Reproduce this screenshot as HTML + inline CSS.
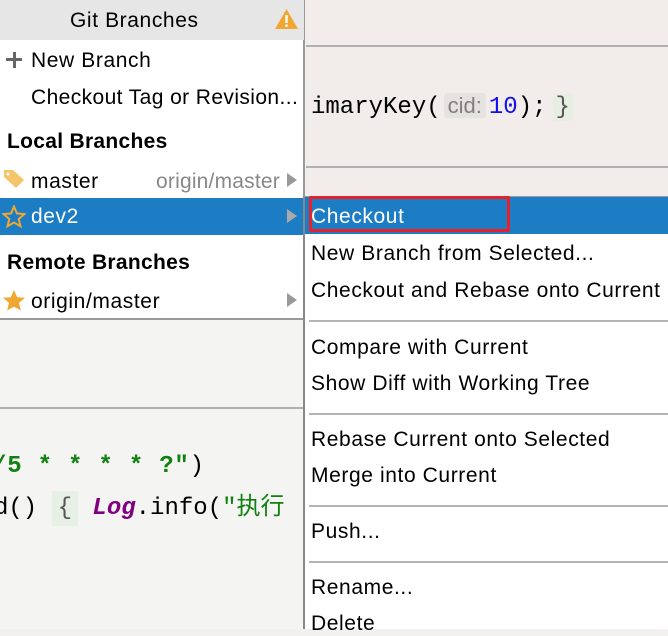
<!DOCTYPE html>
<html><head><meta charset="utf-8"><style>
body{margin:0;width:668px;height:629px;overflow:hidden;position:relative;background:#f3f1f0;font-family:"Liberation Sans","Noto Sans CJK SC",sans-serif;font-size:21px;letter-spacing:0.6px;color:#000}
.a{position:absolute;white-space:nowrap}
.t{line-height:24px;margin-top:1px}
.mono{font-family:"Liberation Mono","Noto Sans CJK SC",monospace;font-size:24px;letter-spacing:0}
</style></head><body>
<div class="a" style="left:306px;top:0;width:362px;height:197px;background:#f2eceb"></div>
<div class="a" style="left:306px;top:45px;width:362px;height:2px;background:#b0b0b0"></div>
<div class="a" style="left:306px;top:166px;width:362px;height:2px;background:#b0b0b0"></div>
<div class="a mono t" style="left:311px;top:93px">imaryKey(<span style="background:#e6e2e0;color:#808080;font-family:'Liberation Sans';font-size:22px;border-radius:3px;padding:0 4px;margin:0 3px">cid:</span><span style="color:#1010ee">10</span>);<span style="background:#e6efe2;color:#555;margin-left:6px;padding:0 3px">}</span></div>
<div class="a" style="left:0;top:320px;width:304px;height:309px;background:#f4f4f3"></div>
<div class="a" style="left:0;top:407px;width:304px;height:2px;background:#b0b0b0"></div>
<div class="a mono t" style="left:-8px;top:454px;color:#108010;font-weight:bold;letter-spacing:0.8px">/5 * * * * ?"<span style="color:#000;font-weight:normal">)</span></div>
<div class="a mono t" style="left:-6px;top:496px">d() <span style="background:#e6f0e4;color:#555;padding:4px 6px">{</span> <span style="color:#800080;font-style:italic;font-weight:bold">Log</span>.info(<span style="color:#108010">"执行</span></div>

<!-- left popup -->
<div class="a" style="left:0;top:0;width:305px;height:320px;background:#fff;border-right:2px solid #999;border-bottom:2px solid #999;box-sizing:border-box"></div>
<div class="a" style="left:0;top:0;width:304px;height:40px;background:#e6e6e6"></div>
<div class="a t" style="left:70px;top:8px">Git Branches</div>
<svg class="a" style="left:274px;top:8px" width="25" height="22" viewBox="0 0 25 22"><path d="M12.5 1L24 21H1Z" fill="#f0a732"/><rect x="11.3" y="7" width="2.4" height="8" fill="#fff"/><rect x="11.3" y="16.5" width="2.4" height="2.4" fill="#fff"/></svg>
<div class="a" style="left:6px;top:58px;width:16px;height:3px;background:#666"></div>
<div class="a" style="left:12.5px;top:52px;width:3px;height:16px;background:#666"></div>
<div class="a t" style="left:31px;top:48px">New Branch</div>
<div class="a t" style="left:31px;top:85px;letter-spacing:0.4px">Checkout Tag or Revision...</div>
<div class="a t" style="left:7px;top:129px;font-weight:bold;letter-spacing:0.3px">Local Branches</div>
<svg class="a" style="left:3px;top:168px" width="22" height="22" viewBox="0 0 22 22"><path d="M1 2h9l11 10-8 8L1 9Z" fill="#f6c46b"/><circle cx="5" cy="6" r="1.5" fill="#fff"/></svg>
<div class="a t" style="left:31px;top:169px">master</div>
<div class="a t" style="left:156px;top:169px;color:#888;letter-spacing:0.2px">origin/master</div>
<svg class="a" style="left:287px;top:173px" width="10" height="14"><path d="M0 0L10 7 0 14Z" fill="#999"/></svg>
<div class="a" style="left:0;top:198px;width:304px;height:37px;background:#1c7cc4"></div>
<svg class="a" style="left:2px;top:205px" width="24" height="23" viewBox="0 0 24 23"><path d="M12 1.5l3 7 7.5.5-5.8 5 1.8 7.3L12 17.5 5.5 21.3l1.8-7.3L1.5 9l7.5-.5Z" fill="none" stroke="#f0a732" stroke-width="2"/></svg>
<div class="a t" style="left:31px;top:204px;color:#fff">dev2</div>
<svg class="a" style="left:287px;top:209px" width="10" height="14"><path d="M0 0L10 7 0 14Z" fill="#aaa"/></svg>
<div class="a t" style="left:7px;top:250px;font-weight:bold;letter-spacing:0.3px">Remote Branches</div>
<svg class="a" style="left:2px;top:289px" width="24" height="23" viewBox="0 0 24 23"><path d="M12 1l3.2 7.2 7.8.6-6 5.1 1.9 7.6L12 17.6 5.1 21.5 7 13.9 1 8.8l7.8-.6Z" fill="#f0a732"/></svg>
<div class="a t" style="left:31px;top:289px">origin/master</div>
<svg class="a" style="left:287px;top:293px" width="10" height="14"><path d="M0 0L10 7 0 14Z" fill="#999"/></svg>

<!-- submenu -->
<div class="a" style="left:303px;top:196px;width:365px;height:433px;background:#fff;border-left:2px solid #888;border-top:1px solid #999;box-sizing:border-box"></div>
<div class="a" style="left:305px;top:197px;width:363px;height:37px;background:#1c7cc4"></div>
<div class="a" style="left:309px;top:196px;width:201px;height:36px;border:3px solid #e8202a;border-radius:2px;box-sizing:border-box"></div>
<div class="a t" style="left:311px;top:204px;color:#fff">Checkout</div>
<div class="a t" style="left:311px;top:241px">New Branch from Selected...</div>
<div class="a t" style="left:311px;top:278px">Checkout and Rebase onto Current</div>
<div class="a" style="left:309px;top:320px;width:359px;height:2px;background:#b4b4b4"></div>
<div class="a t" style="left:311px;top:335px">Compare with Current</div>
<div class="a t" style="left:311px;top:371px">Show Diff with Working Tree</div>
<div class="a" style="left:309px;top:413px;width:359px;height:2px;background:#b4b4b4"></div>
<div class="a t" style="left:311px;top:427px">Rebase Current onto Selected</div>
<div class="a t" style="left:311px;top:463px">Merge into Current</div>
<div class="a" style="left:309px;top:505px;width:359px;height:2px;background:#b4b4b4"></div>
<div class="a t" style="left:311px;top:519px">Push...</div>
<div class="a" style="left:309px;top:561px;width:359px;height:2px;background:#b4b4b4"></div>
<div class="a t" style="left:311px;top:575px">Rename...</div>
<div class="a t" style="left:311px;top:611px">Delete</div>
</body></html>
